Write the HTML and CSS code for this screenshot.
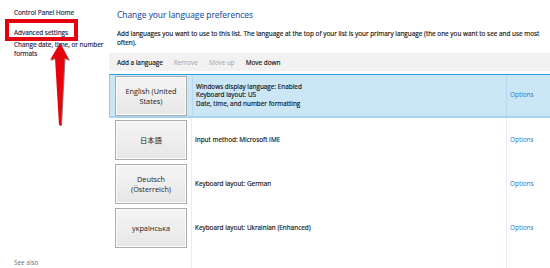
FILE: index.html
```html
<!DOCTYPE html>
<html lang="en">
<head>
    <meta charset="UTF-8">
    <title>Language</title>
    <link rel="stylesheet" href="styles.css">
</head>
<body>
    <div class="page">
        <div class="side">
            <a class="side-link" href="#">Control Panel Home</a>
            <a class="side-link current" href="#">Advanced settings</a>
            <a class="side-link" href="#">Change date, time, or number formats</a>
            <div class="see-also">See also</div>
        </div>
        <div class="main">
            <h1 class="title">Change your language preferences</h1>
            <p class="intro">Add languages you want to use to this list. The language at the top of your list is your primary language (the one you want to see and use most often).</p>
            <div class="toolbar">
                <span class="tool">Add a language</span>
                <span class="tool off">Remove</span>
                <span class="tool off">Move up</span>
                <span class="tool">Move down</span>
            </div>
            <div class="list">
                <div class="row selected">
                    <div class="cell lang"><div class="lang-btn">English (United States)</div></div>
                    <div class="cell info">Windows display language: Enabled<br>Keyboard layout: US<br>Date, time, and number formatting</div>
                    <div class="cell opt"><a href="#">Options</a></div>
                </div>
                <div class="row">
                    <div class="cell lang"><div class="lang-btn">日本語</div></div>
                    <div class="cell info">Input method: Microsoft IME</div>
                    <div class="cell opt"><a href="#">Options</a></div>
                </div>
                <div class="row">
                    <div class="cell lang"><div class="lang-btn">Deutsch (Österreich)</div></div>
                    <div class="cell info">Keyboard layout: German</div>
                    <div class="cell opt"><a href="#">Options</a></div>
                </div>
                <div class="row">
                    <div class="cell lang"><div class="lang-btn">українська</div></div>
                    <div class="cell info">Keyboard layout: Ukrainian (Enhanced)</div>
                    <div class="cell opt"><a href="#">Options</a></div>
                </div>
                <div class="row filler">
                    <div class="cell lang"></div>
                    <div class="cell info"></div>
                    <div class="cell opt"></div>
                </div>
            </div>
        </div>
        <!-- annotation drawn over the page -->
        <div class="mark"></div>
        <svg class="arrow" width="110" height="130" viewBox="0 0 110 130">
            <polygon points="60,43 69,60 64.5,58 61,125 59,125 55,58 50,60" fill="#e8000d"/>
        </svg>
    </div>
</body>
</html>
```

FILE: styles.css
```css
*{ margin: 0; padding: 0; box-sizing: border-box}
html,body{
    height:100%;
    overflow: hidden;
}
body{
    font-family: "Open Sans", "Noto Sans CJK JP", sans-serif;
    font-size: 6.4px;
    color: #111;
    background: #fff;
    -webkit-text-stroke: 0.15px currentColor;
}
a{ text-decoration: none}
.page{
    position: relative;
    display: flex;
    height: 100%;
}
.side{
    width: 109px;
    display: flex;
    flex-direction: column;
    padding: 7.5px 0 1px 14px;
    line-height: 9px;
}
.side-link{
    color: #16214a;
    margin-bottom: 11px;
}
.side-link.current{
    margin-bottom: 3px;
}
.see-also{
    margin-top: auto;
    color: #707070;
    -webkit-text-stroke: 0;
}
.main{
    flex: 1;
    display: flex;
    flex-direction: column;
}
.title{
    font-size: 8.4px;
    font-weight: normal;
    line-height: 12px;
    color: #1f4f9c;
    margin: 9px 0 0 8px;
    -webkit-text-stroke: 0.1px currentColor;
}
.intro{
    line-height: 9px;
    margin: 7.5px 10px 0 8px;
}
.toolbar{
    height: 18px;
    margin-top: 6.5px;
    background: #f2f2f2;
    display: flex;
    align-items: center;
    gap: 11px;
    padding-left: 8px;
}
.tool.off{
    color: #a3a3a3;
    -webkit-text-stroke: 0;
}
.list{
    flex: 1;
    margin-top: 3px;
    display: flex;
    flex-direction: column;
}
.row{
    display: grid;
    grid-template-columns: 82px 1fr 44px;
    height: 44px;
}
.row.selected{
    background: #cbe7f6;
    border-top: 1px solid #2c9ee0;
    border-left: 1px solid #8ecaef;
    border-bottom: 2px solid #a4d4f1;
}
.row.filler{
    flex: 1;
}
.cell{
    display: flex;
    align-items: center;
}
.info,.opt{
    border-left: 1px solid #e4eef8;
    padding-left: 3px;
    line-height: 8.5px;
}
.selected .info,.selected .opt{
    border-left-color: #b6dbf1;
}
.opt a{
    color: #2b70cf;
    -webkit-text-stroke: 0;
}
.lang{
    padding-left: 6px;
}
.selected .lang{
    padding-left: 5px;
}
.lang-btn{
    width: 72px;
    height: 40px;
    border: 1px solid #acacac;
    background: linear-gradient(#f4f4f4, #efefef 45%, #e6e6e6);
    box-shadow: inset 0 0 0 1px #fcfcfc;
    display: flex;
    align-items: center;
    justify-content: center;
    text-align: center;
    padding: 0 8px;
    font-size: 7.3px;
    line-height: 10px;
    color: #222;
    -webkit-text-stroke: 0;
}
.mark{
    position: absolute;
    left: 5px;
    top: 19px;
    width: 73px;
    height: 22px;
    border: 4px solid #e6000d;
}
.arrow{
    position: absolute;
    left: 0;
    top: 0;
    filter: drop-shadow(1px 1px 0.6px rgba(60,0,0,.55));
}
```
